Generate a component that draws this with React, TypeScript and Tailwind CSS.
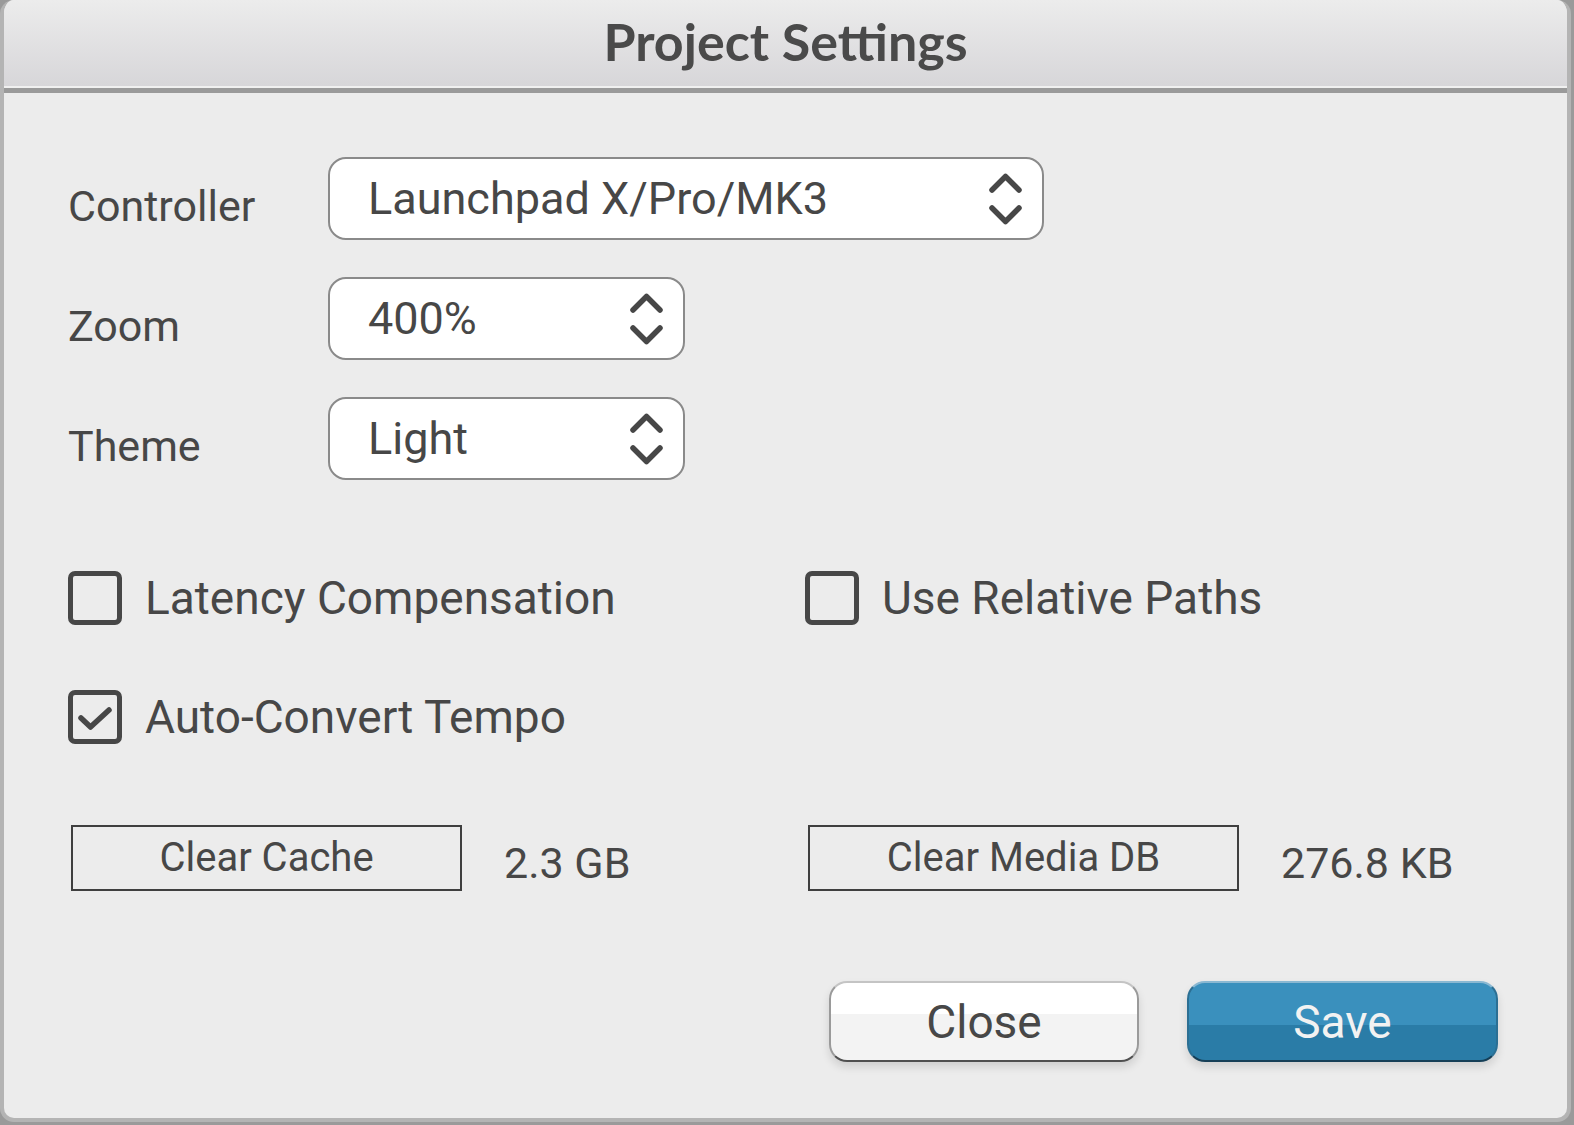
import React from 'react';

// Up/down chevrons used on the right of each select box
function UpDownIcon() {
  return (
    <svg width="33" height="52" viewBox="0 0 33 52" fill="none" stroke="#474747" strokeWidth="5.5" strokeLinecap="round" strokeLinejoin="round">
      <path d="M3 17 L16.5 3.5 L30 17" />
      <path d="M3 35 L16.5 48.5 L30 35" />
    </svg>
  );
}

function SelectBox({ value, className }: { value: string; className: string }) {
  return (
    <div className={`flex h-[83px] items-center justify-between rounded-[18px] border-2 border-[#8a8a8a] bg-white pl-[38px] pr-[20px] ${className}`}>
      <span className="text-[45px] leading-none text-[#474747]">{value}</span>
      <UpDownIcon />
    </div>
  );
}

function FieldRow({ label, value, className }: { label: string; value: string; className: string }) {
  return (
    <div className="flex items-center">
      <div className="w-[260px] pt-[16px] text-[43px] leading-none text-[#474747]">{label}</div>
      <SelectBox value={value} className={className} />
    </div>
  );
}

function Checkbox({ label, checked }: { label: string; checked?: boolean }) {
  return (
    <div className="flex h-[54px] items-center gap-[23px]">
      <div className="flex h-[54px] w-[54px] items-center justify-center rounded-[7px] border-[5px] border-[#474747]">
        {checked && (
          <svg width="44" height="44" viewBox="0 0 44 44" fill="none" stroke="#474747" strokeWidth="5.5" strokeLinecap="round" strokeLinejoin="round">
            <path d="M8 23 L17.5 32 L36 15" />
          </svg>
        )}
      </div>
      <span className="text-[46px] leading-none text-[#474747]">{label}</span>
    </div>
  );
}

function ClearButton({ label, size, className }: { label: string; size: string; className: string }) {
  return (
    <div className="flex items-center">
      <div className={`flex h-[66px] items-center justify-center border-2 border-[#3f3f3f] text-[40px] leading-none text-[#474747] ${className}`}>
        {label}
      </div>
      <span className="ml-[42px] pt-[10px] text-[43px] leading-none text-[#474747]">{size}</span>
    </div>
  );
}

export default function App() {
  return (
    <div className="h-[1125px] w-[1574px] overflow-hidden bg-[#9a9a9a] font-[family-name:Roboto,sans-serif]">
      <div className="h-[1122px] w-[1571px] overflow-hidden rounded-[14px] border-x-4 border-b-4 border-[#b4b4b4] bg-[#ececec]">
        {/* title bar */}
        <div className="flex flex-col">
          <div className="flex h-[86px] items-center justify-center bg-[linear-gradient(to_bottom,#ececec,#d7d6d9)]">
            <h1 className="pb-[4px] font-[family-name:Lato,sans-serif] text-[52px] font-bold leading-none text-[#4a4a4a]">
              Project Settings
            </h1>
          </div>
          <div className="h-[2px] bg-[#f0f0f0]" />
          <div className="h-[5px] bg-[#9a9a9a]" />
        </div>

        <div className="flex flex-col pl-[64px] pt-[64px]">
          <div className="flex flex-col gap-[37px]">
            <FieldRow label="Controller" value="Launchpad X/Pro/MK3" className="w-[716px]" />
            <FieldRow label="Zoom" value="400%" className="w-[357px]" />
            <FieldRow label="Theme" value="Light" className="w-[357px]" />
          </div>

          <div className="mt-[91px] flex">
            <div className="w-[737px]">
              <Checkbox label="Latency Compensation" />
            </div>
            <Checkbox label="Use Relative Paths" />
          </div>
          <div className="mt-[65px] flex">
            <Checkbox label="Auto-Convert Tempo" checked />
          </div>

          <div className="ml-[3px] mt-[81px] flex">
            <div className="w-[737px]">
              <ClearButton label="Clear Cache" size="2.3 GB" className="w-[391px]" />
            </div>
            <ClearButton label="Clear Media DB" size="276.8 KB" className="w-[431px]" />
          </div>

          <div className="mt-[90px] flex justify-end gap-[48px] pr-[69px]">
            <button className="flex h-[81px] w-[310px] items-center justify-center rounded-[18px] border-2 border-x-[#9a9a9a] border-b-[#505050] border-t-[#c4c4c4] bg-[linear-gradient(to_bottom,#ffffff_0%,#ffffff_40%,#f3f3f3_40%,#f3f3f3_100%)] text-[46px] leading-none text-[#474747] shadow-[0_5px_8px_rgba(0,0,0,0.12)]">
              Close
            </button>
            <button className="flex h-[81px] w-[311px] items-center justify-center rounded-[18px] border-2 border-x-[#2c6f93] border-b-[#163f57] border-t-[#8ab8d2] bg-[linear-gradient(to_bottom,#3a90bd_0%,#3a90bd_55%,#2a7ca7_55%,#2a7ca7_100%)] text-[46px] leading-none text-[#f2f2f2] shadow-[0_5px_8px_rgba(0,0,0,0.12)]">
              Save
            </button>
          </div>
        </div>
      </div>
    </div>
  );
}
